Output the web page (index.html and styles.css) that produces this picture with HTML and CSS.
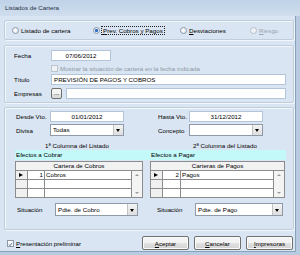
FILE: index.html
```html
<!DOCTYPE html>
<html lang="es">
<head>
    <meta charset="UTF-8">
    <title>Listados de Cartera</title>
    <link rel="stylesheet" href="styles.css">
</head>
<body>
    <div class="window">
        <div class="titlebar">Listados de Cartera</div>
        <div class="client">
            <div class="group radios">
                <label class="radio"><span class="dot"></span>Listado de cartera</label>
                <label class="radio on"><span class="dot"></span><span class="focus"><u>P</u>rev. Cobros y Pagos</span></label>
                <label class="radio"><span class="dot"></span><u>D</u>esviaciones</label>
                <label class="radio off"><span class="dot"></span><u>R</u>iesgo</label>
            </div>

            <div class="group params">
                <div class="row">
                    <span class="lbl">Fecha</span>
                    <div class="edit date">07/06/2012</div>
                </div>
                <div class="row check-row">
                    <span class="lbl"></span>
                    <span class="check dis"></span>
                    <span class="dis-text">Mostrar la situación de cartera en la fecha indicada</span>
                </div>
                <div class="row title-row">
                    <span class="lbl">Título</span>
                    <div class="edit grow">PREVISIÓN DE PAGOS Y COBROS</div>
                </div>
                <div class="row">
                    <span class="lbl">Empresas</span>
                    <span class="dots">...</span>
                    <div class="edit grow"></div>
                </div>
            </div>

            <div class="group listing">
                <div class="col left">
                    <div class="field">
                        <span class="flbl">Desde Vto.</span>
                        <div class="edit date d1">01/01/2012</div>
                    </div>
                    <div class="field sel">
                        <span class="flbl">Divisa</span>
                        <div class="combo c1">Todas<span class="arrow"></span></div>
                    </div>
                    <div class="heading">1ª Columna del Listado</div>
                    <div class="band">Efectos a Cobrar</div>
                    <div class="grid">
                        <div class="gh">Cartera de Cobros</div>
                        <div class="gi cur"></div><div class="gn">1</div><div class="gt">Cobros</div>
                        <div class="gs"><span class="up"></span><span class="down"></span></div>
                        <div class="gi"></div><div class="gn"></div><div class="gt"></div>
                        <div class="gi"></div><div class="gn"></div><div class="gt"></div>
                    </div>
                    <div class="field situ">
                        <span class="flbl">Situación</span>
                        <div class="combo">Pdte. de Cobro<span class="arrow"></span></div>
                    </div>
                </div>

                <div class="col right">
                    <div class="field">
                        <span class="flbl">Hasta Vto.</span>
                        <div class="edit date d1">31/12/2012</div>
                    </div>
                    <div class="field sel">
                        <span class="flbl">Concepto</span>
                        <div class="combo c1"><span class="arrow"></span></div>
                    </div>
                    <div class="heading">2ª Columna del Listado</div>
                    <div class="band">Efectos a Pagar</div>
                    <div class="grid">
                        <div class="gh">Carteras de Pagos</div>
                        <div class="gi cur"></div><div class="gn">2</div><div class="gt">Pagos</div>
                        <div class="gs"><span class="up"></span><span class="down"></span></div>
                        <div class="gi"></div><div class="gn"></div><div class="gt"></div>
                        <div class="gi"></div><div class="gn"></div><div class="gt"></div>
                    </div>
                    <div class="field situ">
                        <span class="flbl">Situación</span>
                        <div class="combo">Pdte. de Pago<span class="arrow"></span></div>
                    </div>
                </div>
            </div>

            <div class="footer">
                <label class="preview">
                    <span class="check on">
                        <svg width="7" height="7" viewBox="0 0 7 7"><path d="M1.2 3.4 L2.8 5.2 L5.8 1.2" fill="none" stroke="#2b4f8c" stroke-width="1.1"/></svg>
                    </span>
                    <u>P</u>resentación preliminar
                </label>
                <div class="buttons">
                    <button><u>A</u>ceptar</button>
                    <button><u>C</u>ancelar</button>
                    <button><u>I</u>mpresoras</button>
                </div>
            </div>
        </div>
    </div>
</body>
</html>
```

FILE: styles.css
```css
body {
    margin: 0;
    font-family: "Liberation Sans", Arial, sans-serif;
    font-size: 6.2px;
    color: #000;
}
.window {
    width: 300px;
    height: 255px;
    background-color: #b7cbe1;
    display: flex;
    flex-direction: column;
    overflow: hidden;
}
.titlebar {
    height: 16px;
    line-height: 16px;
    padding-left: 5px;
    color: #1d2c40;
    background: linear-gradient(#bfd2e8, #d0deee);
}
.client {
    width: 296px;
    height: 236px;
    box-sizing: border-box;
    background-color: #d9e5f2;
    border-right: 1px solid #8aa1bc;
    border-bottom: 1px solid #8aa1bc;
    padding: 4px 2px 0 4px;
    display: flex;
    flex-direction: column;
}
.group {
    box-sizing: border-box;
    width: 290px;
    border: 1px solid #c0cddb;
    border-radius: 2px;
    box-shadow: inset 1px 1px 0 #f3f7fb, 1px 1px 0 #f3f7fb;
}

/* radio group */
.radios {
    height: 20px;
    display: grid;
    grid-template-columns: 81px 87px 70px auto;
    align-items: center;
    padding-left: 7px;
}
.radio {
    display: flex;
    align-items: center;
    white-space: nowrap;
}
.dot {
    width: 7px;
    height: 7px;
    box-sizing: border-box;
    border-radius: 50%;
    border: 1px solid #8d98a5;
    background: radial-gradient(circle at 40% 40%, #ffffff, #dde2e8);
    margin-right: 2px;
}
.radio.on .dot {
    background: radial-gradient(circle, #2d6fc4 0, #2d6fc4 1.3px, #e6edf6 1.8px);
}
.radio.off {
    color: #9aa4b0;
}
.radio.off .dot {
    border-color: #b8c0c9;
    background: #eef2f6;
}
.focus {
    outline: 1px dotted #222;
    padding: 0 1px;
}

/* parameters */
.params {
    margin-top: 5px;
    height: 58px;
    padding: 4px 7px 0 9px;
}
.row {
    display: flex;
    align-items: center;
    height: 11px;
}
.row + .row {
    margin-top: 3px;
}
.row.check-row {
    height: 9px;
}
.row.title-row {
    margin-top: 1px;
}
.lbl {
    width: 37px;
    flex-shrink: 0;
}
.edit {
    box-sizing: border-box;
    height: 11px;
    line-height: 9px;
    background-color: #fff;
    border: 1px solid #b3c5da;
    padding-left: 2px;
    white-space: nowrap;
}
.edit.date {
    width: 60px;
    text-align: center;
    padding-left: 0;
}
.edit.grow {
    flex: 1;
}
.check {
    width: 7px;
    height: 7px;
    box-sizing: border-box;
    border: 1px solid #8d98a5;
    background-color: #fff;
    margin-right: 2px;
    display: flex;
}
.check.dis {
    border-color: #bcc4cc;
    background-color: #eef2f6;
}
.dis-text {
    color: #8e98a3;
}
.dots {
    box-sizing: border-box;
    width: 11px;
    height: 11px;
    line-height: 7px;
    text-align: center;
    border: 1px solid #707070;
    border-radius: 2px;
    background: linear-gradient(#f4f4f4 50%, #dcdcdc 50%);
    margin-right: 4px;
}

/* listing */
.listing {
    margin-top: 4px;
    height: 123px;
    padding: 3px 0 0 10px;
    display: flex;
}
.col {
    display: flex;
    flex-direction: column;
}
.col.left {
    width: 135px;
}
.col.right {
    width: 136px;
}
.field {
    display: flex;
    align-items: center;
    height: 11px;
}
.field.sel {
    height: 12px;
    margin-top: 2px;
}
.flbl {
    box-sizing: border-box;
    flex-shrink: 0;
    width: 35px;
    padding-left: 1px;
}
.right .flbl {
    width: 39px;
    padding-left: 8px;
}
.edit.d1 {
    width: 74px;
}
.combo {
    box-sizing: border-box;
    position: relative;
    height: 12px;
    line-height: 10px;
    width: 83px;
    background-color: #fff;
    border: 1px solid #8e9aa8;
    padding-left: 2px;
}
.combo.c1 {
    width: 74px;
}
.arrow {
    position: absolute;
    top: 0;
    right: 0;
    width: 9px;
    height: 10px;
    background: linear-gradient(#f4f4f4, #dedede);
    border-left: 1px solid #c2c2c2;
}
.arrow::after {
    content: "";
    position: absolute;
    left: 2px;
    top: 4px;
    border-left: 2.5px solid transparent;
    border-right: 2.5px solid transparent;
    border-top: 3px solid #000;
}
.heading {
    height: 8px;
    line-height: 8px;
    margin-top: 6px;
    padding-left: 30px;
}
.right .heading {
    padding-left: 43px;
}
.band {
    height: 10px;
    line-height: 10px;
    background-color: #c4f9f9;
    padding-left: 1px;
}
.right .band {
    width: 135px;
}
.grid {
    margin-top: 1px;
    width: 128px;
    display: grid;
    grid-template-columns: 11px 16px 1fr 10px;
    grid-template-rows: repeat(4, 8px);
    gap: 1px;
    background-color: #8c8c8c;
    border: 1px solid #8c8c8c;
    box-sizing: border-box;
    height: 37px;
}
.right .grid {
    width: 135px;
    grid-template-columns: 11px 17px 1fr 10px;
}
.gh {
    grid-column: 1 / -1;
    background-color: #f2f2f2;
    text-align: center;
    line-height: 8px;
}
.gi {
    background-color: #f0f0f0;
    position: relative;
}
.gi.cur::after {
    content: "";
    position: absolute;
    left: 3px;
    top: 1.5px;
    border-top: 2.5px solid transparent;
    border-bottom: 2.5px solid transparent;
    border-left: 4px solid #000;
}
.gn {
    background-color: #fff;
    text-align: right;
    line-height: 8px;
    padding-right: 1px;
}
.gt {
    background-color: #fff;
    line-height: 8px;
    padding-left: 1px;
}
.gs {
    grid-column: 4;
    grid-row: 2 / 5;
    background-color: #f4f4f4;
    position: relative;
}
.up, .down {
    position: absolute;
    left: 3px;
    border-left: 2px solid transparent;
    border-right: 2px solid transparent;
}
.up {
    top: 3px;
    border-bottom: 2px solid #9a9a9a;
}
.down {
    bottom: 3px;
    border-top: 2px solid #9a9a9a;
}
.field.situ {
    height: 13px;
    margin-top: 5px;
}
.situ .flbl {
    width: 40px;
    padding-left: 2px;
}
.right .situ .flbl {
    width: 45px;
    padding-left: 7px;
}
.situ .combo {
    height: 13px;
    line-height: 11px;
}
.situ .arrow {
    height: 11px;
}
.situ .arrow::after {
    top: 4.5px;
}
.right .situ .combo {
    width: 88px;
}

/* footer */
.footer {
    margin-top: 6px;
    height: 14px;
    display: flex;
    align-items: center;
    padding-left: 3px;
}
.preview {
    display: flex;
    align-items: center;
}
.buttons {
    margin-left: auto;
    display: flex;
    gap: 5px;
}
button {
    box-sizing: border-box;
    width: 47px;
    height: 14px;
    padding: 0;
    font-family: inherit;
    font-size: 6.2px;
    color: #000;
    border: 1px solid #707070;
    border-radius: 2px;
    background: linear-gradient(#f3f3f3 45%, #e0e0e0 55%, #d2d2d2);
    box-shadow: inset 0 0 0 1px #fbfbfb;
}
```
